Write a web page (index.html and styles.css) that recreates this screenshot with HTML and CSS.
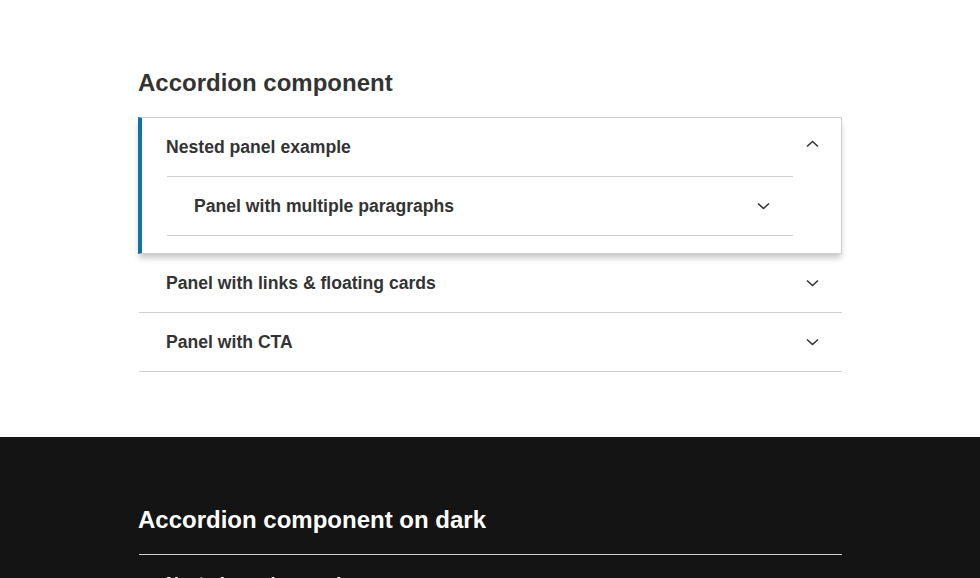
FILE: index.html
```html
<!DOCTYPE html>
<html lang="en">
<head>
<meta charset="utf-8">
<title>Accordion component</title>
<link rel="stylesheet" href="styles.css">
</head>
<body>
<section class="section light">
  <div class="container">
    <h2 class="title">Accordion component</h2>
    <div class="accordion">
      <div class="panel open">
        <div class="head">
          <span class="label">Nested panel example</span>
          <svg class="chev up" width="13" height="8" viewBox="0 0 13 8"><path d="M1 6.5 L6.5 1.5 L12 6.5" /></svg>
        </div>
        <div class="body">
          <div class="nested">
            <div class="head">
              <span class="label">Panel with multiple paragraphs</span>
              <svg class="chev" width="13" height="8" viewBox="0 0 13 8"><path d="M1 1.5 L6.5 6.5 L12 1.5" /></svg>
            </div>
          </div>
        </div>
      </div>
      <div class="panel">
        <div class="head">
          <span class="label">Panel with links &amp; floating cards</span>
          <svg class="chev" width="13" height="8" viewBox="0 0 13 8"><path d="M1 1.5 L6.5 6.5 L12 1.5" /></svg>
        </div>
      </div>
      <div class="panel">
        <div class="head">
          <span class="label">Panel with CTA</span>
          <svg class="chev" width="13" height="8" viewBox="0 0 13 8"><path d="M1 1.5 L6.5 6.5 L12 1.5" /></svg>
        </div>
      </div>
    </div>
  </div>
</section>
<section class="section dark">
  <div class="container">
    <h2 class="title">Accordion component on dark</h2>
    <div class="accordion">
      <div class="panel">
        <div class="head">
          <span class="label">Nested panel example</span>
          <svg class="chev" width="13" height="8" viewBox="0 0 13 8"><path d="M1 1.5 L6.5 6.5 L12 1.5" /></svg>
        </div>
      </div>
    </div>
  </div>
</section>
</body>
</html>
```
FILE: styles.css
```css
html, body {
  margin: 0;
  padding: 0;
}
body {
  font-family: "Liberation Sans", Arial, Helvetica, sans-serif;
  color: #333;
  background: #fff;
}
.container {
  width: 704px;
  margin: 0 auto;
}
.light {
  padding-top: 69px;
  padding-bottom: 65px;
}
.dark {
  background: #141414;
  color: #fff;
  padding-top: 69px;
  min-height: 200px;
}
.title {
  margin: 0 0 20px;
  font-size: 24px;
  line-height: 28px;
  font-weight: 700;
}
.dark .title {
  margin-bottom: 20px;
}
.accordion {
  display: flex;
  flex-direction: column;
}
.panel {
  border-bottom: 1px solid #d0d0d0;
  margin-left: 1px;
}
.dark .panel {
  border-top: 1px solid #cfcfcf;
  border-bottom: none;
}
.head {
  display: flex;
  align-items: center;
  justify-content: space-between;
  padding: 19px 23px 19px 27px;
}
.label {
  font-size: 17.6px;
  line-height: 20px;
  font-weight: 700;
}
.chev {
  display: block;
  fill: none;
  stroke: #333;
  stroke-width: 1.6;
}
.chev.up {
  margin-bottom: 7px;
}
.dark .chev {
  stroke: #fff;
}
.panel.open {
  margin-left: 0;
  border: 1px solid #d0d0d0;
  border-left: 4px solid #0a74a3;
  box-shadow: 0 5px 6px -1px rgba(0, 0, 0, 0.22);
}
.panel.open > .head {
  padding: 19px 22px 19px 24px;
}
.body {
  padding: 0 48px 17px 25px;
}
.nested {
  border-top: 1px solid #d0d0d0;
  border-bottom: 1px solid #d0d0d0;
}
.nested .head {
  padding: 19px 23px 19px 27px;
}
```
